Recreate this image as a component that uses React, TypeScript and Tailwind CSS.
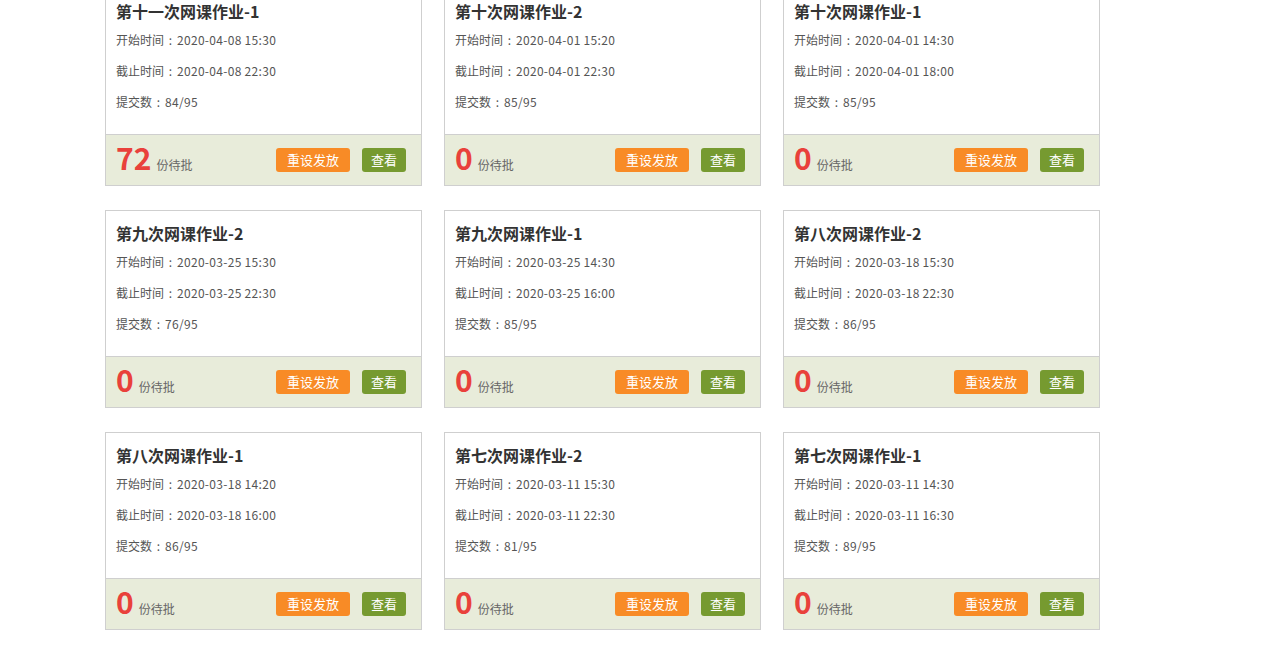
const homeworks = [
  { title: '第十一次网课作业-1', start: '2020-04-08 15:30', end: '2020-04-08 22:30', submitted: '84/95', pending: 72 },
  { title: '第十次网课作业-2', start: '2020-04-01 15:20', end: '2020-04-01 22:30', submitted: '85/95', pending: 0 },
  { title: '第十次网课作业-1', start: '2020-04-01 14:30', end: '2020-04-01 18:00', submitted: '85/95', pending: 0 },
  { title: '第九次网课作业-2', start: '2020-03-25 15:30', end: '2020-03-25 22:30', submitted: '76/95', pending: 0 },
  { title: '第九次网课作业-1', start: '2020-03-25 14:30', end: '2020-03-25 16:00', submitted: '85/95', pending: 0 },
  { title: '第八次网课作业-2', start: '2020-03-18 15:30', end: '2020-03-18 22:30', submitted: '86/95', pending: 0 },
  { title: '第八次网课作业-1', start: '2020-03-18 14:20', end: '2020-03-18 16:00', submitted: '86/95', pending: 0 },
  { title: '第七次网课作业-2', start: '2020-03-11 15:30', end: '2020-03-11 22:30', submitted: '81/95', pending: 0 },
  { title: '第七次网课作业-1', start: '2020-03-11 14:30', end: '2020-03-11 16:30', submitted: '89/95', pending: 0 },
];

function InfoLine({ label, value }: { label: string; value: string }) {
  return (
    <p className="h-[31px] leading-[31px]">
      {label}
      <span className="inline-block w-[13px] text-center">:</span>
      <span className="tracking-[0.3px]">{value}</span>
    </p>
  );
}

export default function App() {
  return (
    <div
      className="min-h-screen bg-white overflow-hidden"
      style={{ fontFamily: '"Microsoft YaHei", "Noto Sans CJK SC", sans-serif' }}
    >
      {/* list is scrolled so the first row's top is cut off */}
      <div className="ml-[105px] mt-[-12px] grid grid-cols-[repeat(3,317px)] gap-x-[22px] gap-y-[24px]">
        {homeworks.map((hw) => (
          <div key={hw.title} className="h-[198px] flex flex-col border border-[#cfcfcf] bg-white">
            <div className="h-[145px] px-[10px] pt-[11px]">
              <h3 className="h-[22px] leading-[22px] text-[16px] font-bold text-[#333]">{hw.title}</h3>
              <div className="mt-[2px] text-[12px] text-[#555]">
                <InfoLine label="开始时间" value={hw.start} />
                <InfoLine label="截止时间" value={hw.end} />
                <InfoLine label="提交数" value={hw.submitted} />
              </div>
            </div>
            <div className="flex-1 flex items-center justify-between border-t border-[#cfcfcf] bg-[#e8ecda] pl-[10px] pr-[15px]">
              <div className="flex items-baseline gap-[5px] pb-[5px]">
                <span className="text-[30px] leading-[30px] font-bold text-[#e9413b]">{hw.pending}</span>
                <span className="text-[12px] text-[#666]">份待批</span>
              </div>
              <div className="flex items-center gap-[12px]">
                <button className="w-[74px] h-[24px] rounded-[3px] bg-[#f88b26] text-[13px] text-white">重设发放</button>
                <button className="w-[44px] h-[24px] rounded-[3px] bg-[#769a30] text-[13px] text-white">查看</button>
              </div>
            </div>
          </div>
        ))}
      </div>
    </div>
  );
}
